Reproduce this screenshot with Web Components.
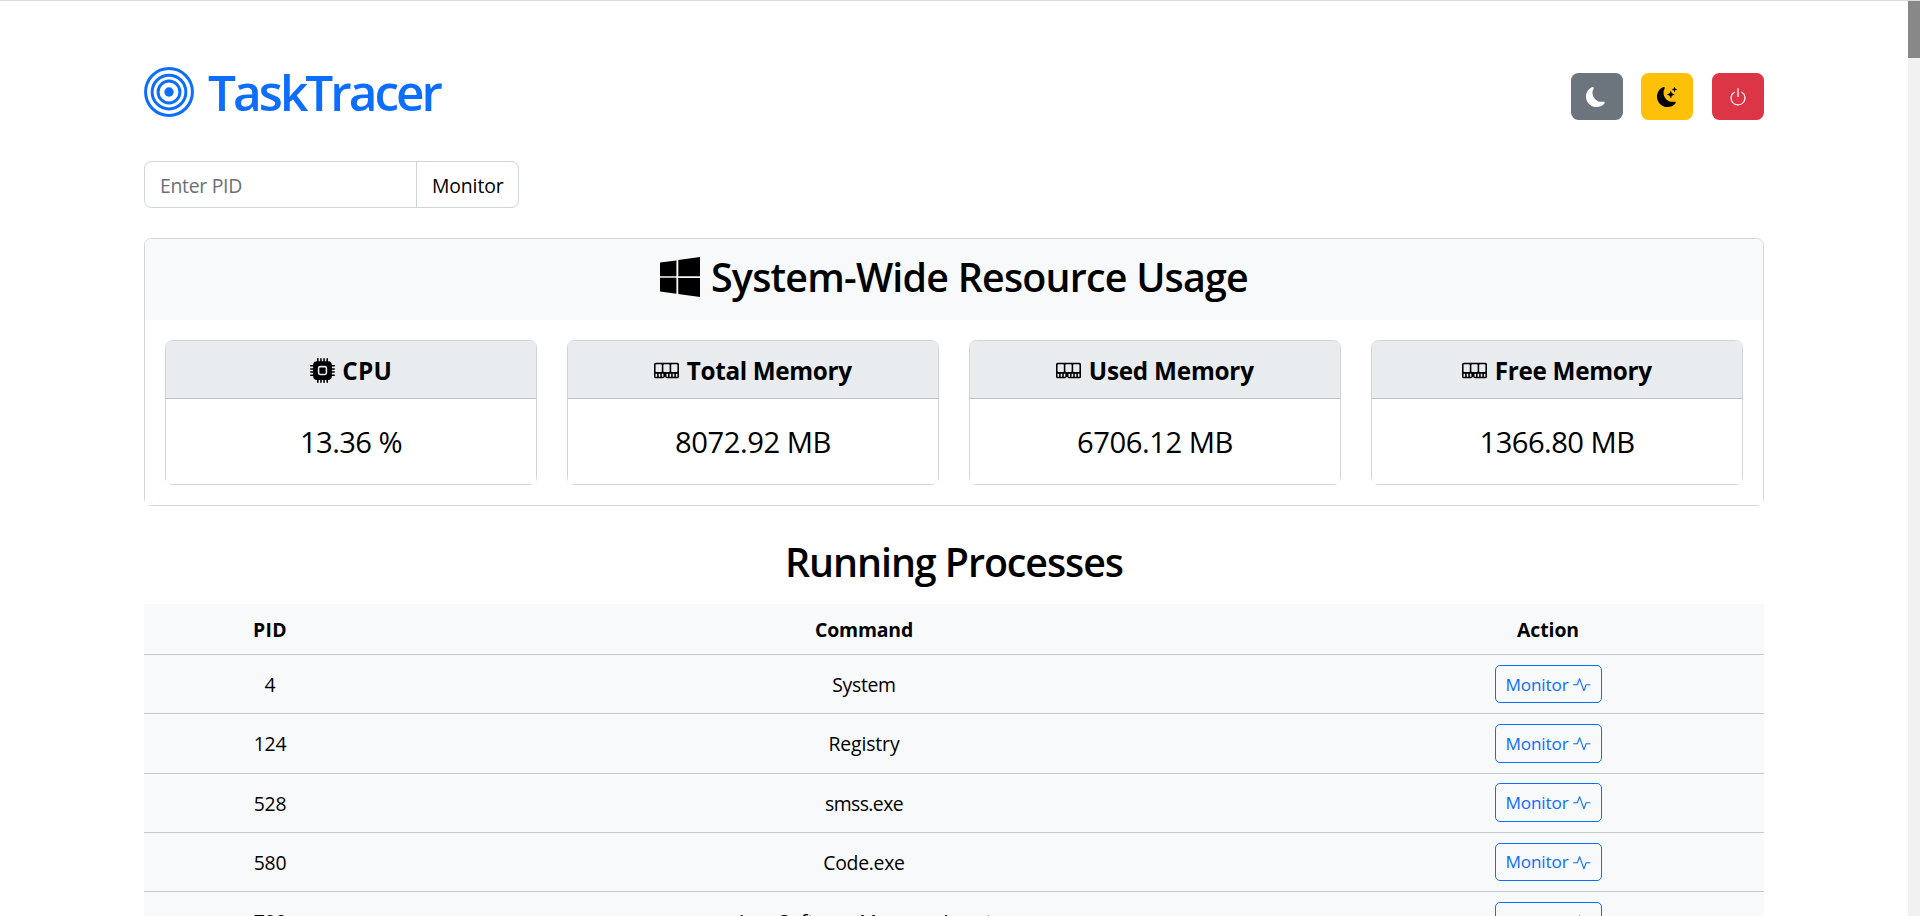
<!DOCTYPE html>
<html lang="en">
<head>
<meta charset="utf-8">
<title>TaskTracer</title>
<style>
html,body{margin:0;height:100%;overflow:hidden;background:#fff}
body{font-family:"Open Sans","Noto Sans",sans-serif;font-size:19.4px;line-height:30px;color:#000}
</style>
</head>
<body>
<task-app></task-app>
<script>
const ICONS = {
  target: '<g fill="none" stroke="currentColor" stroke-width=".96"><circle cx="8" cy="8" r="7.5"/><circle cx="8" cy="8" r="5.4"/><circle cx="8" cy="8" r="3.5"/></g><circle cx="8" cy="8" r="1.5"/>',
  moon: '<path d="M6 .278a.77.77 0 0 1 .08.858 7.2 7.2 0 0 0-.878 3.46c0 4.021 3.278 7.277 7.318 7.277q.792-.001 1.533-.16a.79.79 0 0 1 .81.316.73.73 0 0 1-.031.893A8.35 8.35 0 0 1 8.344 16C3.734 16 0 12.286 0 7.71 0 4.266 2.114 1.312 5.124.06A.75.75 0 0 1 6 .278"/>',
  power: '<path d="M7.5 1v7h1V1z"/><path d="M3 8.812a5 5 0 0 1 2.578-4.375l-.485-.874A6 6 0 1 0 11 3.616l-.501.865A5 5 0 1 1 3 8.812"/>',
  windows: '<path d="M6.555 1.375 0 2.237v5.45h6.555zM0 13.795l6.555.933V8.313H0zm7.278-5.4.026 6.378L16 16V8.395zM16 0 7.33 1.244v6.414H16z"/>',
  cpu: '<path d="M6.5 6a.5.5 0 0 0-.5.5v3a.5.5 0 0 0 .5.5h3a.5.5 0 0 0 .5-.5v-3a.5.5 0 0 0-.5-.5z"/><path d="M5.5.5a.5.5 0 0 0-1 0V2A2.5 2.5 0 0 0 2 4.5H.5a.5.5 0 0 0 0 1H2v1H.5a.5.5 0 0 0 0 1H2v1H.5a.5.5 0 0 0 0 1H2v1H.5a.5.5 0 0 0 0 1H2A2.5 2.5 0 0 0 4.5 14v1.5a.5.5 0 0 0 1 0V14h1v1.5a.5.5 0 0 0 1 0V14h1v1.5a.5.5 0 0 0 1 0V14h1v1.5a.5.5 0 0 0 1 0V14a2.5 2.5 0 0 0 2.5-2.5h1.5a.5.5 0 0 0 0-1H14v-1h1.5a.5.5 0 0 0 0-1H14v-1h1.5a.5.5 0 0 0 0-1H14v-1h1.5a.5.5 0 0 0 0-1H14A2.5 2.5 0 0 0 11.5 2V.5a.5.5 0 0 0-1 0V2h-1V.5a.5.5 0 0 0-1 0V2h-1V.5a.5.5 0 0 0-1 0V2h-1zm1 4.5h3A1.5 1.5 0 0 1 11 6.5v3A1.5 1.5 0 0 1 9.5 11h-3A1.5 1.5 0 0 1 5 9.5v-3A1.5 1.5 0 0 1 6.5 5"/>',
  memory: '<path d="M1 3a1 1 0 0 0-1 1v8a1 1 0 0 0 1 1h4.586a1 1 0 0 0 .707-.293l.353-.353a.5.5 0 0 1 .708 0l.353.353a1 1 0 0 0 .707.293H15a1 1 0 0 0 1-1V4a1 1 0 0 0-1-1zm.5 1h3a.5.5 0 0 1 .5.5v4a.5.5 0 0 1-.5.5h-3a.5.5 0 0 1-.5-.5v-4a.5.5 0 0 1 .5-.5m5 0h3a.5.5 0 0 1 .5.5v4a.5.5 0 0 1-.5.5h-3a.5.5 0 0 1-.5-.5v-4a.5.5 0 0 1 .5-.5m4.5.5a.5.5 0 0 1 .5-.5h3a.5.5 0 0 1 .5.5v4a.5.5 0 0 1-.5.5h-3a.5.5 0 0 1-.5-.5zM2 10v2H1v-2zm2 0v2H3v-2zm2 0v2H5v-2zm3 0v2H8v-2zm2 0v2h-1v-2zm2 0v2h-1v-2zm2 0v2h-1v-2z"/>',
  activity: '<path d="M6 2a.5.5 0 0 1 .47.33L10 12.036l1.53-4.208A.5.5 0 0 1 12 7.5h3.5a.5.5 0 0 1 0 1h-3.15l-1.88 5.17a.5.5 0 0 1-.94 0L6 3.964 4.47 8.171A.5.5 0 0 1 4 8.5H.5a.5.5 0 0 1 0-1h3.15l1.88-5.17A.5.5 0 0 1 6 2"/>'
};
ICONS.moonStars = ICONS.moon + '<path d="M10.794 3.148a.217.217 0 0 1 .412 0l.387 1.162c.173.518.579.924 1.097 1.097l1.162.387a.217.217 0 0 1 0 .412l-1.162.387a1.73 1.73 0 0 0-1.097 1.097l-.387 1.162a.217.217 0 0 1-.412 0l-.387-1.162A1.73 1.73 0 0 0 9.31 6.593l-1.162-.387a.217.217 0 0 1 0-.412l1.162-.387a1.73 1.73 0 0 0 1.097-1.097zM13.863.099a.145.145 0 0 1 .274 0l.258.774c.115.346.386.617.732.732l.774.258a.145.145 0 0 1 0 .274l-.774.258a1.16 1.16 0 0 0-.732.732l-.258.774a.145.145 0 0 1-.274 0l-.258-.774a1.16 1.16 0 0 0-.732-.732l-.774-.258a.145.145 0 0 1 0-.274l.774-.258c.346-.115.617-.386.732-.732z"/>';

function define(name, render, after) {
  customElements.define(name, class extends HTMLElement {
    connectedCallback() {
      if (this.shadowRoot) return;
      this.attachShadow({ mode: 'open' }).innerHTML = render(this);
      if (after) after(this);
    }
  });
}

define('task-icon', el => {
  const s = el.getAttribute('size');
  return `<style>:host{display:block;flex:none;width:${s}px;height:${s}px}svg{display:block}</style>
<svg width="${s}" height="${s}" viewBox="0 0 16 16" fill="currentColor">${ICONS[el.getAttribute('name')]}</svg>`;
});

// A single line of text tracked so that it spans the given measure.
define('text-run', () => '<style>:host{display:inline-block;white-space:nowrap}</style><slot></slot>', el => {
  const extra = (+el.getAttribute('measure') - el.getBoundingClientRect().width) / el.textContent.length;
  el.style.letterSpacing = extra.toFixed(3) + 'px';
});

define('tool-button', el => `<style>
:host{display:flex;align-items:center;justify-content:center;box-sizing:border-box;width:52px;height:47px;padding-top:1px;border-radius:7.5px;background:${el.getAttribute('fill')};color:${el.getAttribute('ink')}}
</style><task-icon name="${el.getAttribute('icon')}" size="20"></task-icon>`);

define('app-header', () => `<style>
:host{display:flex;justify-content:space-between;height:60px;padding-top:61px}
.brand{display:flex;align-items:center;gap:14px;color:#0d6efd;font-size:49.5px;line-height:60px;font-weight:600}
.tools{display:flex;gap:18px;padding-top:11px}
tool-button:first-child{box-sizing:border-box;padding-right:2px}
tool-button:last-child{margin-left:1px}
</style>
<div class="brand"><task-icon name="target" size="50"></task-icon><text-run measure="232">TaskTracer</text-run></div>
<div class="tools">
<tool-button icon="moon" fill="#6c757d" ink="#fff"></tool-button>
<tool-button icon="moonStars" fill="#ffc107" ink="#000"></tool-button>
<tool-button icon="power" fill="#dc3545" ink="#fff"></tool-button>
</div>`);

define('pid-form', () => `<style>
:host{display:flex;box-sizing:border-box;width:375px;height:47px;margin-top:39px;border:1px solid #ced4da;border-radius:7.5px;line-height:47px}
.field{flex:1;padding-left:15px;color:#6b7076}
.go{width:102px;box-sizing:border-box;padding-left:15px;border-left:1px solid #ced4da}
</style><div class="field"><text-run measure="82">Enter PID</text-run></div><div class="go"><text-run measure="71.5">Monitor</text-run></div>`);

define('stat-card', el => `<style>
:host{display:block;box-sizing:border-box;height:145px;border:1px solid #d2d3d5;border-radius:7.5px;flex:1}
.head{display:flex;align-items:center;justify-content:center;gap:7.5px;box-sizing:border-box;height:58px;padding-top:2px;background:#e9ecef;border-bottom:1px solid #bcc2c7;border-radius:6.5px 6.5px 0 0;font-size:24.3px;font-weight:700}
.value{display:flex;justify-content:center;height:85px;background:#fff;font-size:29.2px;line-height:86px}
</style>
<div class="head"><task-icon name="${el.getAttribute('icon')}" size="25"></task-icon><text-run measure="${el.getAttribute('label-measure')}">${el.getAttribute('label')}</text-run></div>
<div class="value"><slot></slot></div>`);

define('usage-panel', () => `<style>
:host{display:block;box-sizing:border-box;height:268px;margin-top:30px;border:1px solid #ced4da;border-radius:7.5px}
.head{display:flex;align-items:center;justify-content:center;gap:11px;height:81px;background:#f8f9fa;border-radius:6.5px 6.5px 0 0;font-size:39.4px;font-weight:560}
.head task-icon{margin-bottom:5px}
.head text-run{margin-bottom:5px}
.cards{display:flex;gap:30px;padding:20px;background:#fff}
</style>
<div class="head"><task-icon name="windows" size="40"></task-icon><text-run measure="537">System-Wide Resource Usage</text-run></div>
<div class="cards">
<stat-card icon="cpu" label="CPU" label-measure="50"><text-run measure="102">13.36 %</text-run></stat-card>
<stat-card icon="memory" label="Total Memory" label-measure="165"><text-run measure="156">8072.92 MB</text-run></stat-card>
<stat-card icon="memory" label="Used Memory" label-measure="165"><text-run measure="156">6706.12 MB</text-run></stat-card>
<stat-card icon="memory" label="Free Memory" label-measure="157"><text-run measure="155">1366.80 MB</text-run></stat-card>
</div>`);

define('monitor-button', () => `<style>
:host{display:flex;align-items:center;justify-content:center;gap:4.5px;box-sizing:border-box;width:107px;height:38.3px;padding-top:1px;border:1px solid #0d6efd;border-radius:5px;color:#0d6efd;font-size:17.2px;line-height:26px}
</style><text-run measure="63">Monitor</text-run><task-icon name="activity" size="17.5"></task-icon>`);

define('process-row', () => `<style>
:host{display:grid;grid-template-columns:252px 936px 432px;align-items:center;justify-items:center;box-sizing:border-box;height:59.25px;border-bottom:1px solid #c6c8ca;background:#f8f9fa}
:host([head]){height:51px;font-weight:700}
::slotted(text-run){padding-top:2px}
</style><slot></slot>`);

const rows = [['4',11,'System',63.5],['124',32.5,'Registry',71],['528',32.5,'smss.exe',78],['580',32.5,'Code.exe',81.5],['788',32.5,'AsusSoftwareManagerAgent',257]];
define('process-table', () => `<style>
:host{display:block}
h2{display:flex;justify-content:center;margin:35px 0 0;height:63px;line-height:42px;font-size:39.4px;font-weight:560}
</style>
<h2><text-run measure="338">Running Processes</text-run></h2>
<process-row head><text-run measure="34">PID</text-run><text-run measure="98">Command</text-run><text-run measure="62">Action</text-run></process-row>
${rows.map(([p, pw, c, cw]) => `<process-row><text-run measure="${pw}">${p}</text-run><text-run measure="${cw}">${c}</text-run><monitor-button></monitor-button></process-row>`).join('')}`);

define('page-scrollbar', () => `<style>
:host{display:block;width:12px;background:#f1f1f1}
div{height:57px;background:#888}
</style><div></div>`);

define('task-app', () => `<style>
:host{display:flex;height:916px;box-sizing:border-box;border-top:1px solid #dcdcdc;overflow:hidden}
main{flex:1;padding:0 144px;min-width:0}
</style>
<main><app-header></app-header><pid-form></pid-form><usage-panel></usage-panel><process-table></process-table></main>
<page-scrollbar></page-scrollbar>`);
</script>
</body>
</html>
